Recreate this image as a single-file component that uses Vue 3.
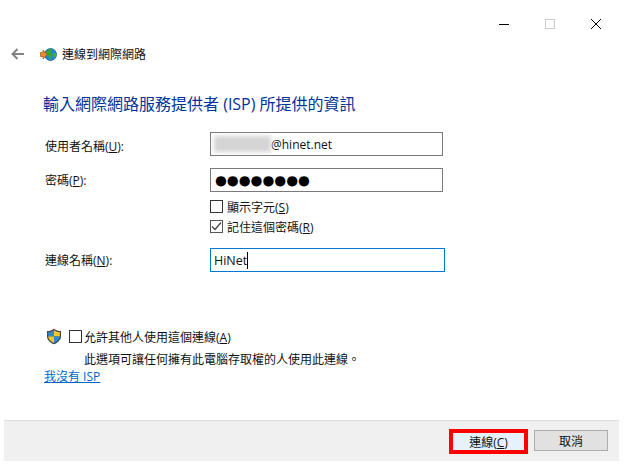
<template>
  <div class="dialog">
    <div class="caption">
      <svg class="cap-icon" width="12" height="12" viewBox="0 0 12 12"><path d="M1 6.5H11" stroke="#000" fill="none" /></svg>
      <svg class="cap-icon" width="12" height="12" viewBox="0 0 12 12"><rect x="1.5" y="1.5" width="9" height="9" stroke="#ccc" fill="none" /></svg>
      <svg class="cap-icon" width="12" height="12" viewBox="0 0 12 12"><path d="M1 1L11 11M11 1L1 11" stroke="#000" fill="none" /></svg>
    </div>

    <div class="nav">
      <svg class="back" width="14" height="12" viewBox="0 0 14 12">
        <path d="M13 6H2M6.5 1L1.500 6L6.500 11" stroke="#808080" stroke-width="2" fill="none" />
      </svg>
      <svg class="globe" width="17" height="15" viewBox="0 0 17 15">
        <circle cx="10.500" cy="7.500" r="6" fill="#1f86d8" stroke="#1d5f8c" stroke-width="0.8" />
        <path d="M6 5c1.500-3 4-3.500 6-3l-1 3 1.500 2.500-1 4.500-2 1.500-1-5-2.500-1.500z" fill="#35a635" />
        <path d="M13.500 6l2.500.5-.5 3-2 1.500z" fill="#46b33f" />
        <path d="M0.500 5.500H3V3l4 4.500L3 12V9.500H0.500z" fill="#f08a2c" stroke="#a8500f" stroke-width="0.7" />
      </svg>
      <span class="nav-title">連線到網際網路</span>
    </div>

    <h1 class="heading">輸入網際網路服務提供者 (ISP) 所提供的資訊</h1>

    <div class="form">
      <label class="label first">使用者名稱(<u>U</u>):</label>
      <div class="input">
        <span class="blurred"></span>
        <span class="user">@hinet.net</span>
      </div>

      <label class="label">密碼(<u>P</u>):</label>
      <div class="input dots">●●●●●●●●</div>

      <div class="checks">
        <div class="check"><span class="box"></span><span>顯示字元(<u>S</u>)</span></div>
        <div class="check">
          <span class="box checked">
            <svg width="11" height="11" viewBox="0 0 11 11"><path d="M1 5.500L4 8.500L10 1.500" stroke="#444" stroke-width="1.200" fill="none" /></svg>
          </span>
          <span>記住這個密碼(<u>R</u>)</span>
        </div>
      </div>

      <label class="label">連線名稱(<u>N</u>):</label>
      <div class="input focused">HiNet<span class="caret"></span></div>
    </div>

    <div class="allow">
      <svg class="shield" width="16" height="17" viewBox="0 0 16 17">
        <path d="M8 .7C6 2.300 3.500 3 1 3v5.500c0 3.500 3 6.200 7 7.800 4-1.600 7-4.300 7-7.800V3c-2.500 0-5-.7-7-2.300z" fill="#4a4a4a" />
        <path d="M8 2.200V8.500H2.200V4.200C4.300 4.100 6.300 3.400 8 2.200z" fill="#2a8ad4" />
        <path d="M8 2.200c1.700 1.200 3.700 1.900 5.800 2v4.300H8z" fill="#f5c52c" />
        <path d="M2.200 8.500H8v6.400C4.800 13.500 2.400 11.400 2.200 8.500z" fill="#f5c52c" />
        <path d="M8 8.500h5.800C13.600 11.400 11.200 13.500 8 14.900z" fill="#2a8ad4" />
      </svg>
      <span class="box"></span>
      <span class="allow-text">允許其他人使用這個連線(<u>A</u>)</span>
    </div>
    <p class="note">此選項可讓任何擁有此電腦存取權的人使用此連線。</p>
    <a class="link">我沒有 ISP</a>

    <div class="footer">
      <button class="btn primary">連線(<u>C</u>)</button>
      <button class="btn">取消</button>
    </div>
  </div>
</template>

<script setup>
</script>

<style>
html, body {
  margin: 0;
  background: #fff;
}
</style>

<style scoped>
.dialog {
  width: 640px;
  height: 464px;
  overflow: hidden;
  position: relative;
  background: #fff;
  color: #111;
  font-family: "Open Sans", "Noto Sans CJK TC", sans-serif;
  font-size: 12px;
  display: flex;
  flex-direction: column;
}

.caption {
  height: 18px;
  padding: 18px 38px 0 0;
  display: flex;
  justify-content: flex-end;
  gap: 34px;
  flex-shrink: 0;
}

.cap-icon {
  display: block;
}

.nav {
  height: 20px;
  margin-top: 8px;
  padding-left: 11px;
  display: flex;
  align-items: center;
}

.back {
  margin-right: 15px;
}

.globe {
  margin-right: 5px;
}

.nav-title {
  font-size: 12px;
}

.heading {
  margin: 28px 0 0 43px;
  font-size: 16px;
  line-height: 24px;
  font-weight: 400;
  color: #003399;
}

.form {
  margin: 16px 0 0 45px;
  display: grid;
  grid-template-columns: 165px 235px;
  row-gap: 12px;
  align-items: center;
}

.label {
  font-size: 12px;
}

.first {
  padding-top: 4px;
}

.label u,
.check u,
.allow u,
.btn u {
  text-underline-offset: 1px;
}

.input {
  box-sizing: border-box;
  width: 233px;
  height: 24px;
  border: 1px solid #7a7a7a;
  padding-left: 3px;
  display: flex;
  align-items: center;
  font-size: 12.5px;
}

.user {
  font-size: 12px;
}

.blurred {
  width: 57px;
  height: 16px;
  background: #d4d4d4;
  filter: blur(2px);
}

.dots {
  grid-column: 2;
  font-family: "DejaVu Sans", sans-serif;
  font-size: 13.6px;
  color: #000;
  padding-left: 4px;
}

.checks {
  grid-column: 2;
  margin: -4px 0 3px;
  display: flex;
  flex-direction: column;
  gap: 7px;
}

.check {
  height: 13px;
  display: flex;
  align-items: center;
  gap: 4px;
  font-size: 12px;
}

.box {
  box-sizing: border-box;
  width: 13px;
  height: 13px;
  border: 1px solid #333;
  background: #fff;
  display: inline-flex;
  align-items: center;
  justify-content: center;
  flex-shrink: 0;
}

.checked {
  border-color: #555;
}

.focused {
  width: 235px;
  border-color: #0078d7;
}

.caret {
  width: 1px;
  height: 17px;
  background: #000;
}

.allow {
  margin: 56px 0 0 46px;
  display: flex;
  align-items: center;
  gap: 7px;
  height: 17px;
  font-size: 12px;
}

.allow-text {
  margin-left: -5px;
}

.note {
  margin: 6px 0 0 84px;
  line-height: 17px;
  font-size: 12px;
}

.link {
  margin: 0 0 0 44px;
  line-height: 18px;
  color: #0066cc;
  text-decoration: underline;
  font-size: 12px;
  align-self: flex-start;
}

.footer {
  position: absolute;
  left: 4px;
  top: 420px;
  box-sizing: border-box;
  width: 615px;
  height: 41px;
  background: #f0f0f0;
  border-top: 1px solid #dfdfdf;
  display: flex;
  justify-content: flex-end;
  align-items: flex-start;
  gap: 6px;
  padding: 8px 11px 0 0;
}

.btn {
  box-sizing: border-box;
  width: 74px;
  height: 21px;
  margin-top: 1px;
  border: 1px solid #adadad;
  background: #e1e1e1;
  color: #111;
  font-family: inherit;
  font-size: 12px;
  padding: 0;
}

.primary {
  width: 79px;
  height: 25px;
  margin-top: 0;
  border: 4px solid #f00;
  background: #e5f1fb;
}
</style>
